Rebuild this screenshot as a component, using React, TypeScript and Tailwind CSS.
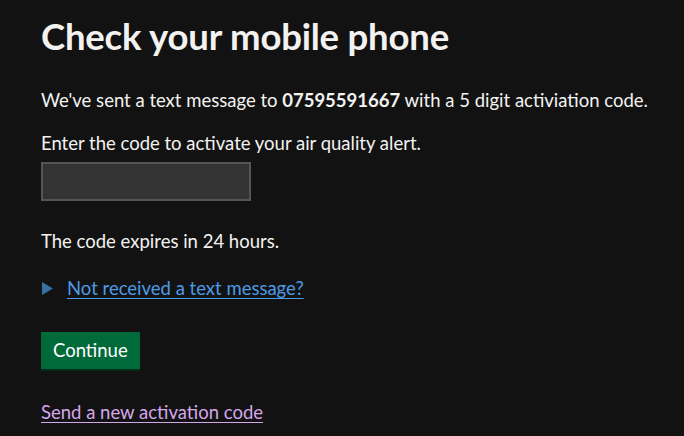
export default function App() {
  return (
    <div className="min-h-screen w-full bg-[#121212] pl-[41px] pr-[15px] pt-[14px] text-[#f3f2f1] font-['Lato','Liberation_Sans',sans-serif]">
      <h1 className="text-[36.5px] font-bold leading-[44px] tracking-[-0.2px]">Check your mobile phone</h1>

      <p className="mt-[30px] text-[18.5px] leading-[25px]">
        We've sent a text message to <span className="font-bold">07595591667</span> with a 5 digit activiation code.
      </p>

      <label htmlFor="code" className="mt-[18px] block text-[18.5px] leading-[25px]">
        Enter the code to activate your air quality alert.
      </label>
      <input
        id="code"
        type="text"
        className="mt-[6px] block h-[39px] w-[210px] border-2 border-[#555555] bg-[#333333] px-2 text-[18.5px] text-white outline-none"
      />

      <p className="mt-[28px] text-[18.5px] leading-[25px]">The code expires in 24 hours.</p>

      <div className="mt-[22px] flex items-center gap-[14px]">
        <svg width="11" height="13" viewBox="0 0 11 13" className="ml-[1px]">
          <polygon points="0,0 11,6.5 0,13" fill="#3a6ea5" />
        </svg>
        <a href="#" className="text-[18.5px] leading-[25px] text-[#4c9be6] underline underline-offset-[3px]">
          Not received a text message?
        </a>
      </div>

      <button className="mt-[31px] block h-[37px] bg-[#006a3a] px-[12px] text-[18.5px] text-white shadow-[0_2px_0_#002d18]">
        Continue
      </button>

      <a href="#" className="mt-[31px] inline-block text-[18.5px] leading-[25px] text-[#d5a6ea] underline underline-offset-[3px]">
        Send a new activation code
      </a>
    </div>
  )
}
